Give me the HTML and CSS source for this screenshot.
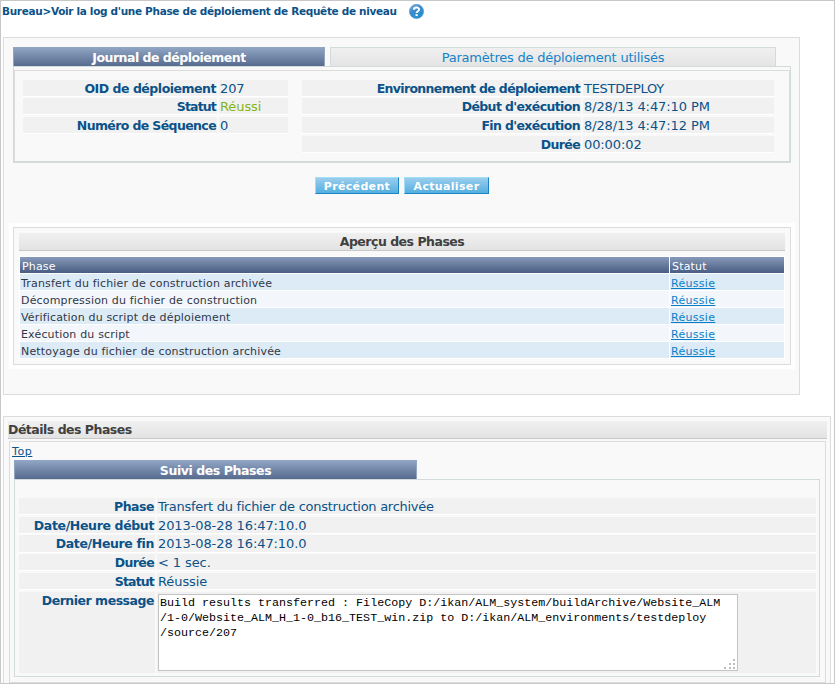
FILE: index.html
```html
<!DOCTYPE html>
<html lang="fr">
<head>
<meta charset="utf-8">
<title>Journal de déploiement</title>
<link rel="stylesheet" href="styles.css">
</head>
<body>
<div class="page">
  <header class="crumbs">
    <h1>Bureau&gt;Voir la log d'une Phase de déploiement de Requête de niveau</h1>
    <svg class="help" viewBox="0 0 15 15" width="15" height="15">
      <defs><linearGradient id="hg" x1="0" y1="0" x2="0.6" y2="1"><stop offset="0" stop-color="#8bbde6"/><stop offset="0.45" stop-color="#3f8ccb"/><stop offset="1" stop-color="#1c8fd0"/></linearGradient></defs>
      <circle cx="7.5" cy="7.4" r="7.1" fill="url(#hg)" stroke="#4d8fc5" stroke-width="0.6"/>
      <path d="M5 5.7C5 2.8 10.1 2.8 10.1 5.6C10.1 7.3 7.6 7.2 7.6 9.1" fill="none" stroke="#fff" stroke-width="2"/>
      <rect x="6.5" y="10.2" width="2.2" height="1.9" fill="#fff"/>
    </svg>
  </header>

  <section class="panel log">
    <nav class="tabs">
      <span class="tab active">Journal de déploiement</span>
      <a class="tab idle">Paramètres de déploiement utilisés</a>
    </nav>
    <div class="sheet">
      <div class="sheet-in">
        <dl class="info left">
          <dt class="wide">OID de déploiement</dt><dd>207</dd>
          <dt class="narrow">Statut</dt><dd class="ok">Réussi</dd>
          <dt>Numéro de Séquence</dt><dd>0</dd>
        </dl>
        <dl class="info right">
          <dt class="env-label">Environnement de déploiement</dt><dd class="env">TESTDEPLOY</dd>
          <dt>Début d'exécution</dt><dd>8/28/13 4:47:10 PM</dd>
          <dt>Fin d'exécution</dt><dd>8/28/13 4:47:12 PM</dd>
          <dt>Durée</dt><dd>00:00:02</dd>
        </dl>
      </div>
    </div>
    <div class="actions"><button class="b1">Précédent</button><button class="b2">Actualiser</button></div>
    <div class="overview">
      <div class="overview-in">
        <h2 class="bar center">Aperçu des Phases</h2>
        <div class="table">
          <div class="th">Phase</div><div class="th">Statut</div>
          <div class="td">Transfert du fichier de construction archivée</div><div class="td"><a>Réussie</a></div>
          <div class="td alt">Décompression du fichier de construction</div><div class="td alt"><a>Réussie</a></div>
          <div class="td">Vérification du script de déploiement</div><div class="td"><a>Réussie</a></div>
          <div class="td alt">Exécution du script</div><div class="td alt"><a>Réussie</a></div>
          <div class="td">Nettoyage du fichier de construction archivée</div><div class="td"><a>Réussie</a></div>
        </div>
      </div>
    </div>
  </section>

  <section class="panel details">
    <h2 class="bar">Détails des Phases</h2>
    <div class="details-in">
      <a class="top">Top</a>
      <div class="tab active follow">Suivi des Phases</div>
      <div class="phase">
        <dl class="info single">
          <dt class="wide">Phase</dt><dd class="long">Transfert du fichier de construction archivée</dd>
          <dt class="wider">Date/Heure début</dt><dd>2013-08-28 16:47:10.0</dd>
          <dt class="wider">Date/Heure fin</dt><dd>2013-08-28 16:47:10.0</dd>
          <dt>Durée</dt><dd>&lt; 1 sec.</dd>
          <dt class="narrow">Statut</dt><dd>Réussie</dd>
          <dt class="last wide">Dernier message</dt>
          <dd class="last"><div class="message">Build results transferred : FileCopy D:/ikan/ALM_system/buildArchive/Website_ALM
/1-0/Website_ALM_H_1-0_b16_TEST_win.zip to D:/ikan/ALM_environments/testdeploy
/source/207<svg class="grip" width="12" height="10" viewBox="0 0 12 10" fill="#bdbdbd"><path d="M9 0h2v2H9zM5 4h2v2H5zM9 4h2v2H9zM0 8h2v2H0zM5 8h2v2H5zM9 8h2v2H9z"/></svg></div></dd>
        </dl>
      </div>
    </div>
  </section>
</div>
</body>
</html>
```
FILE: styles.css
```css
* { box-sizing: border-box; }
body { margin: 0; background: #fff; font-family: "DejaVu Sans", Verdana, sans-serif; color: #0b5288; }
h1, h2, dl, dd { margin: 0; }
.page { width: 835px; height: 684px; border: 1px solid #c8c8c8; padding: 0 0 0 2px; overflow: hidden; }

.crumbs { height: 36px; display: flex; align-items: flex-start; padding-top: 3px; }
.crumbs h1 { font-size: 10.5px; line-height: 15px; width: 406px; margin-left: -1px; margin-right: 1px; white-space: nowrap; letter-spacing: -0.32px; }
.help { display: block; }

.panel { border: 1px solid #dcdcdc; background: #f9f9f9; }
.log { width: 797px; height: 358px; padding: 9px 4px 0 5px; }
.tabs { display: flex; gap: 5px; margin-left: 4px; height: 19px; }
.tab { text-align: center; font-size: 13px; line-height: 19px; height: 19px; white-space: nowrap; }
.active { width: 312px; color: #fff; font-size: 12.5px; font-weight: bold; background: linear-gradient(#8fa3c2, #566b8e); border: 1px solid #93a5c4; border-bottom: 0; letter-spacing: -0.5px; }
.idle { width: 446px; color: #1583c9; background: linear-gradient(#f0f0f0, #e4e4e4); border: 1px solid #d2dada; border-bottom: 0; letter-spacing: -0.22px; }
.sheet { margin-left: 4px; width: 778px; height: 97px; border: 1px solid #d2dada; padding-top: 3px; }
.sheet-in { height: 92px; border: 1px solid #dcdcdc; border-bottom-color: #d2dada; padding: 9px 0 0 8px; display: flex; gap: 14px; }

.info { display: grid; column-gap: 2px; font-size: 13px; line-height: 17px; align-content: start; white-space: nowrap; }
.info dt, .info dd { background: #f1f1f1; border-bottom: 1px solid #fff; }
.info dt { font-size: 12.5px; font-weight: bold; text-align: right; padding-right: 1px; letter-spacing: -0.62px; }
.info dt.narrow { letter-spacing: -0.85px; }
.info dt.wide { letter-spacing: -0.48px; }
.info dt.wider { letter-spacing: -0.36px; }
.info dt.env-label { letter-spacing: -0.66px; }
.info dd { padding-left: 1px; letter-spacing: -0.1px; }
.info dd.env, .info dd.long { letter-spacing: -0.27px; }
.info dd.ok { color: #84b414; }
.left, .right { grid-template-rows: 18px 19px 19px 17px; }
.left dt, .left dd, .right dt, .right dd { height: 17px; }
.left { grid-template-columns: 194px 69px; }
.right { grid-template-columns: 279px 191px; }

.actions { display: flex; justify-content: center; gap: 5px; margin: 14px 0 29px 0; padding-right: 1px; }
.actions button { height: 17px; border: 1px solid; border-color: #9fe0f8 #1b84c4 #1b84c4 #9fe0f8; background: linear-gradient(#9acdec, #55afe0); color: #fff; font: bold 11px/13px "DejaVu Sans", Verdana, sans-serif; letter-spacing: 0.33px; padding: 1px 0 0 1px; }
.b1 { width: 84px; }
.b2 { width: 85px; }

.overview { width: 786px; height: 146px; background: #fff; padding: 4px; }
.overview-in { width: 778px; height: 138px; background: #f9f9f9; border: 1px solid #dcdcdc; padding: 5px; }
.bar { height: 18px; font-size: 12.5px; line-height: 17px; color: #404040; background: linear-gradient(#f0f0f0, #e3e3e3); border-bottom: 1px solid #c8c8c8; letter-spacing: -0.5px; }
.center { text-align: center; width: 766px; }
.table { display: grid; grid-template-columns: 649px 114px; grid-auto-rows: 16px; gap: 1px; background: #fff; padding: 1px; width: 766px; margin-top: 5px; font-size: 11px; line-height: 19px; letter-spacing: 0.17px; }
.th { color: #fff; background: linear-gradient(#8799ba, #475d82); padding-left: 2px; }
.td { color: #303848; background: #ddebf6; padding-left: 1px; }
.alt { background: #f3f6fb; }
.td a { color: #0a7fc8; text-decoration: underline; letter-spacing: 0.3px; }

.details { margin-top: 21px; width: 828px; height: 290px; padding: 4px 3px 0 4px; }
.details-in { margin: 2px 0 0 1px; width: 817px; height: 242px; border: 1px solid #dcdcdc; padding: 1px 0 0 2px; }
.top { display: block; font-size: 11px; line-height: 17px; height: 17px; text-decoration: underline; letter-spacing: 0.6px; }
.follow { margin-left: 2px; width: 403px; letter-spacing: -0.42px; }
.phase { margin-left: 2px; width: 806px; height: 198px; border: 1px solid #d2dada; padding: 18px 2px 0 4px; }
.single { grid-template-columns: 136px 659px; grid-template-rows: 19px 18px 19px 19px 19px 81px; }
.single dt, .single dd { height: 17px; }
.single dt:nth-of-type(3), .single dd:nth-of-type(3) { height: 18px; }
.info .last { height: 81px; border: 0; }
.info dd.last { padding-top: 2px; letter-spacing: 0; }
.message { position: relative; width: 580px; height: 77px; background: #fff; border: 1px solid #c4c4c4; color: #000; padding: 1px; font: 11.68px/15px "Liberation Mono", monospace; white-space: pre; }
.grip { position: absolute; right: 1px; bottom: 1px; }
```
